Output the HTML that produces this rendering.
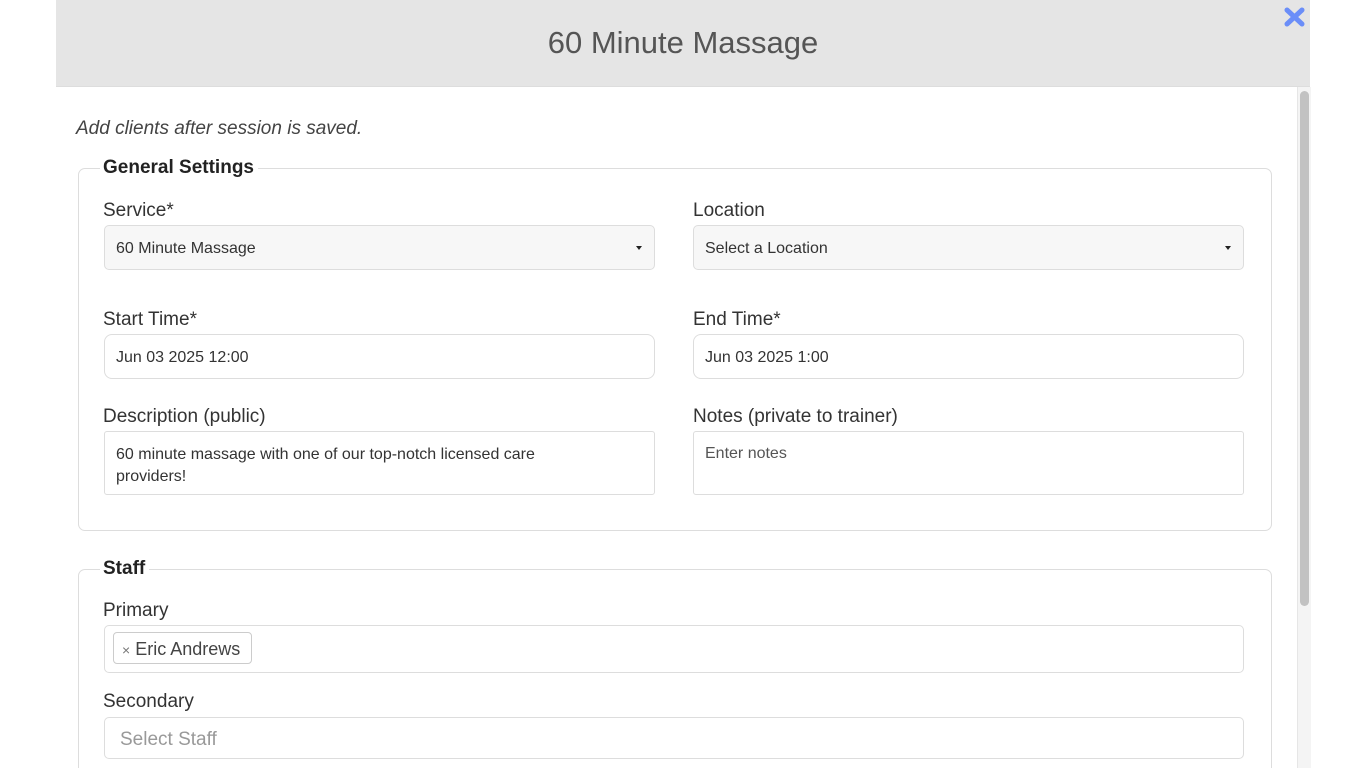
<!DOCTYPE html>
<html><head><style>
html,body{margin:0;width:1366px;height:768px;overflow:hidden}
body{background:#fff;font-family:"Liberation Sans",Arial,sans-serif;color:#333;position:relative}
.a{position:absolute}
.hdr{left:56px;top:0;width:1254px;height:86px;background:#e5e5e5;border-bottom:1px solid #ddd}
.title{left:56px;width:1254px;top:25px;text-align:center;font-size:31px;color:#555}
.fs{border:1px solid #ddd;border-radius:7px}
.leg{background:#fff;font-weight:bold;font-size:19px;color:#222;padding:0 4px 0 0}
.lbl{font-size:19px;color:#333}
.in{box-sizing:border-box;border:1px solid #ddd;border-radius:5px;background:#fff;font-size:16px;color:#333;padding-left:11px}
.sel{background:#f7f7f7}
.caret{position:absolute;right:12px;top:20px;width:0;height:0;border-left:3.5px solid transparent;border-right:3.5px solid transparent;border-top:4px solid #222}
</style></head><body>
<div class="a hdr"></div>
<div class="a title">60 Minute Massage</div>
<svg class="a" style="left:1284px;top:7px" width="21" height="20" viewBox="0 0 21 20"><path d="M3 3L18 17M18 3L3 17" stroke="#6b8ef8" stroke-width="5" stroke-linecap="round"/></svg>
<div class="a" style="left:1297px;top:87px;width:13px;height:681px;background:#f4f4f4;border-left:1px solid #e6e6e6"></div>
<div class="a" style="left:1300px;top:91px;width:9px;height:515px;background:#c2c2c2;border-radius:5px"></div>
<div class="a" style="left:76px;top:118px;font-size:19px;font-style:italic;color:#444">Add clients after session is saved.</div>

<div class="a fs" style="left:78px;top:168px;width:1192px;height:361px"></div>
<div class="a leg" style="left:100px;top:157px;padding-left:3px">General Settings</div>
<div class="a lbl" style="left:103px;top:200px">Service*</div>
<div class="a in sel" style="left:104px;top:225px;width:551px;height:45px;line-height:46px">60 Minute Massage<span class="caret"></span></div>
<div class="a lbl" style="left:693px;top:200px">Location</div>
<div class="a in sel" style="left:693px;top:225px;width:551px;height:45px;line-height:46px">Select a Location<span class="caret"></span></div>
<div class="a lbl" style="left:103px;top:309px">Start Time*</div>
<div class="a in" style="left:104px;top:334px;width:551px;height:45px;line-height:46px;border-radius:8px">Jun 03 2025 12:00</div>
<div class="a lbl" style="left:693px;top:309px">End Time*</div>
<div class="a in" style="left:693px;top:334px;width:551px;height:45px;line-height:46px;border-radius:8px">Jun 03 2025 1:00</div>
<div class="a lbl" style="left:103px;top:406px">Description (public)</div>
<div class="a in" style="left:104px;top:431px;width:551px;height:64px;padding-top:12px;line-height:22px;border-radius:3px">60 minute massage with one of our top-notch licensed care<br>providers!</div>
<div class="a lbl" style="left:693px;top:406px">Notes (private to trainer)</div>
<div class="a in" style="left:693px;top:431px;width:551px;height:64px;padding-top:11px;line-height:22px;border-radius:3px;color:#555">Enter notes</div>

<div class="a fs" style="left:78px;top:569px;width:1192px;height:210px"></div>
<div class="a leg" style="left:100px;top:558px;padding-left:3px">Staff</div>
<div class="a lbl" style="left:103px;top:600px">Primary</div>
<div class="a in" style="left:104px;top:625px;width:1140px;height:48px"></div>
<div class="a" style="left:113px;top:632px;width:139px;height:32px;border:1px solid #ccc;border-radius:4px;box-sizing:border-box;font-size:18px;line-height:32px;color:#444;padding-left:8px"><span style="font-size:14px;color:#777">×</span> Eric Andrews</div>
<div class="a lbl" style="left:103px;top:691px">Secondary</div>
<div class="a in" style="left:104px;top:717px;width:1140px;height:42px;line-height:44px;font-size:19px;color:#999;padding-left:15px">Select Staff</div>
</body></html>
